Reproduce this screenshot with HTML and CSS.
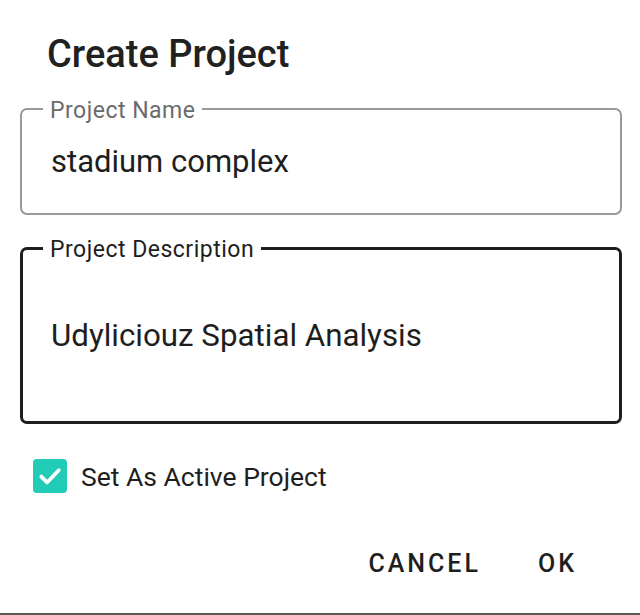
FILE: index.html
```html
<!DOCTYPE html>
<html>
<head>
<meta charset="utf-8">
<link rel="stylesheet" href="styles.css">
</head>
<body>
<div class="dialog">
  <h1 class="title">Create Project</h1>
  <fieldset class="field field-idle">
    <legend class="label">Project Name</legend>
    <div class="value value-name">stadium complex</div>
  </fieldset>
  <fieldset class="field field-focus">
    <legend class="label">Project Description</legend>
    <div class="value value-desc">Udyliciouz Spatial Analysis</div>
  </fieldset>
  <label class="check-row">
    <span class="checkbox">
      <svg viewBox="0 0 24 24" width="28" height="28"><path d="M4.5 12.5 L9.5 17.5 L19.5 7" fill="none" stroke="#fff" stroke-width="3.2" stroke-linecap="round" stroke-linejoin="round"/></svg>
    </span>
    <span class="check-text">Set As Active Project</span>
  </label>
  <div class="actions">
    <span class="btn">CANCEL</span>
    <span class="btn">OK</span>
  </div>
</div>
<div class="bottom-bar"></div>
</body>
</html>
```
FILE: styles.css
```css
html, body {
  margin: 0;
  padding: 0;
  background: #fff;
}
body {
  width: 640px;
  height: 615px;
  overflow: hidden;
  font-family: Roboto, "Noto Sans", sans-serif;
  color: #1f1f1f;
  display: flex;
  flex-direction: column;
}
.dialog {
  flex: 1;
  padding: 0 18px 0 20px;
  display: flex;
  flex-direction: column;
}
.title {
  margin: 32px 0 0 27px;
  font-size: 38px;
  font-weight: 500;
  line-height: 44px;
  color: #212121;
}
.field {
  margin: 0;
  padding: 0;
  border-radius: 7px;
  min-width: 0;
  box-sizing: border-box;
}
.field-idle {
  margin-top: 18px;
  border: 2px solid #9a9a9a;
  height: 121px;
}
.field-focus {
  margin-top: 18px;
  border: 3px solid #1e1e1e;
  height: 191px;
}
.label {
  padding: 4px 7px 0;
  font-size: 23px;
  line-height: 26px;
  letter-spacing: 0.5px;
}
.field-idle .label {
  color: #6b6b6b;
  margin-left: 21px;
}
.field-focus .label {
  color: #1e1e1e;
  margin-left: 20px;
}
.value {
  padding-left: 29px;
  font-size: 31px;
  color: #1e1e1e;
  line-height: 36px;
}
.value-name {
  margin-top: 20px;
}
.value-desc {
  padding-left: 28px;
  margin-top: 55px;
  font-size: 31.3px;
}
.check-row {
  display: flex;
  align-items: center;
  margin: 35px 0 0 13px;
}
.checkbox {
  width: 34px;
  height: 34px;
  background: #21cbb6;
  border-radius: 4px;
  display: flex;
  align-items: center;
  justify-content: center;
}
.check-text {
  margin-left: 14px;
  font-size: 26.5px;
  color: #1e1e1e;
}
.actions {
  display: flex;
  justify-content: flex-end;
  gap: 57px;
  margin: 56px 45px 0 0;
}
.btn {
  font-size: 25px;
  line-height: 30px;
  font-weight: 500;
  letter-spacing: 3px;
  color: #1e1e1e;
}
.bottom-bar {
  height: 2px;
  background: #5d5853;
}
```
